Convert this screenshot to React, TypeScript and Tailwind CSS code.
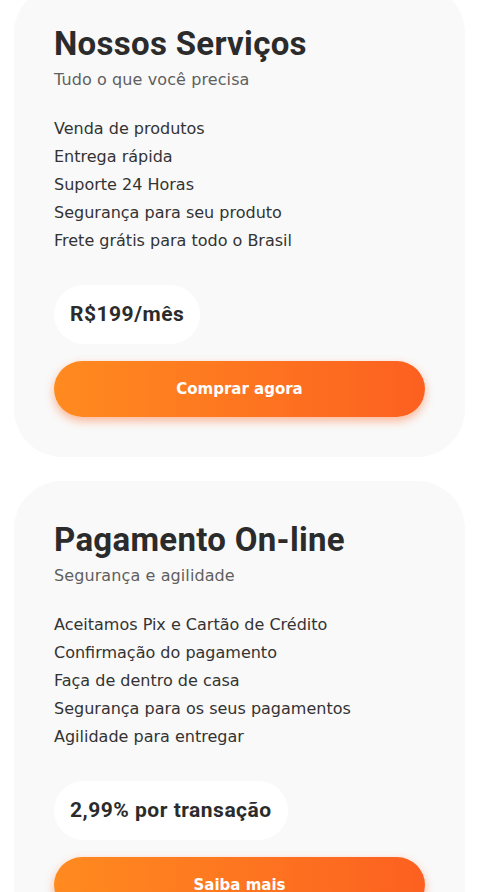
import React from "react";

type Card = {
  title: string;
  subtitle: string;
  items: string[];
  price: string;
  cta: string;
};

const cards: Card[] = [
  {
    title: "Nossos Serviços",
    subtitle: "Tudo o que você precisa",
    items: [
      "Venda de produtos",
      "Entrega rápida",
      "Suporte 24 Horas",
      "Segurança para seu produto",
      "Frete grátis para todo o Brasil",
    ],
    price: "R$199/mês",
    cta: "Comprar agora",
  },
  {
    title: "Pagamento On-line",
    subtitle: "Segurança e agilidade",
    items: [
      "Aceitamos Pix e Cartão de Crédito",
      "Confirmação do pagamento",
      "Faça de dentro de casa",
      "Segurança para os seus pagamentos",
      "Agilidade para entregar",
    ],
    price: "2,99% por transação",
    cta: "Saiba mais",
  },
];

function ServiceCard({ card }: { card: Card }) {
  return (
    <div className="rounded-[48px] bg-[#f9f9f9] p-10">
      <h2 className="font-['Roboto',sans-serif] text-[33px] font-bold leading-[38px] tracking-[0.3px] text-[#2b2b2b]">
        {card.title}
      </h2>
      <p className="mt-[5px] font-['DejaVu_Sans',sans-serif] text-base leading-6 tracking-[0.1px] text-[#5f5f5f]">
        {card.subtitle}
      </p>
      <ul className="mt-[23px] font-['DejaVu_Sans',sans-serif] text-base leading-7 text-[#333]">
        {card.items.map((it) => (
          <li key={it}>{it}</li>
        ))}
      </ul>
      <div className="mt-[30px] flex">
        <div className="flex h-[59px] items-center rounded-full bg-white px-4 font-['Roboto',sans-serif] text-[21px] font-bold tracking-[0.5px] text-[#2b2b2b]">
          {card.price}
        </div>
      </div>
      <button className="mt-[17px] flex h-14 w-full items-center justify-center rounded-full bg-gradient-to-r from-[#ff8a1f] to-[#fc6020] font-['DejaVu_Sans',sans-serif] text-[15px] font-bold text-white shadow-[0_4px_10px_rgba(252,100,32,0.45)]">
        {card.cta}
      </button>
    </div>
  );
}

export default function App() {
  return (
    <div className="min-h-screen overflow-hidden bg-white">
      <div className="-mt-[15px] flex flex-col gap-6 px-[14px] pb-10">
        {cards.map((c) => (
          <ServiceCard key={c.title} card={c} />
        ))}
      </div>
    </div>
  );
}
